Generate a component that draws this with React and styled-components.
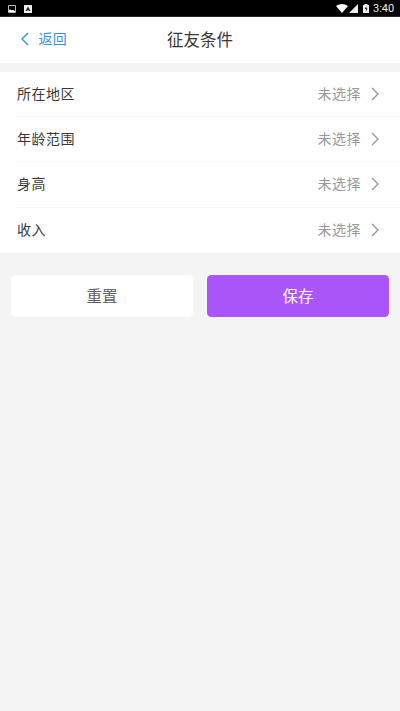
import React from 'react';
import styled, { createGlobalStyle } from 'styled-components';

const GlobalStyle = createGlobalStyle`
  * { box-sizing: border-box; }
  body { margin: 0; background: #f4f4f4; font-family: Roboto, "Noto Sans CJK SC", sans-serif; }
`;
const Screen = styled.div`
  width: 400px; height: 711px; background: #f4f4f4; overflow: hidden;
`;
const StatusBar = styled.div`
  height: 17px; background: #000; border-bottom: 1px solid #2b2826;
  display: flex; align-items: center; justify-content: space-between;
  padding: 1px 6px 0 8px; color: #fff;
`;
const StatusGroup = styled.div`
  display: flex; align-items: center; gap: ${p => p.$gap}px;
  svg { display: block; }
`;
const Clock = styled.span`
  font-size: 11px; line-height: 15px; width: 21px; color: #eee; white-space: nowrap;
`;
const Battery = styled.svg`
  margin: 0 3px 0 4px;
`;
const Header = styled.header`
  height: 46px; background: #fff; display: grid; grid-template-columns: 100px 1fr 100px; align-items: center;
`;
const Back = styled.button`
  border: 0; background: none; padding: 0 0 2px 20px; display: flex; align-items: center; gap: 9.5px;
  color: #3490dc; font: inherit; font-size: 14px; letter-spacing: 0.3px; line-height: 20px;
`;
const Title = styled.h1`
  margin: 1px 0 0; text-align: center; font-size: 16.5px; font-weight: 400; line-height: 24px; color: #383838;
`;
const List = styled.main`
  margin-top: 9px; background: #fff; height: 181px;
`;
const Row = styled.div`
  height: ${p => (p.$first ? 45 : 45.33)}px; margin-left: 17px; padding-right: 20px;
  display: flex; align-items: center; line-height: 20px;
  border-bottom: ${p => (p.$last ? 0 : 1)}px solid #f6f6f6;
  font-size: 14px; letter-spacing: 0.5px; color: #383838;
  svg { display: block; }
`;
const Label = styled.span`
  margin-top: -1px;
`;
const Value = styled(Label)`
  margin-left: auto; margin-right: 10px; color: #999;
`;
const Actions = styled.div`
  display: grid; grid-template-columns: 1fr 1fr; gap: 14.5px; padding: 22px 11.25px 0;
`;
const Button = styled.button`
  height: 42px; border: 0; border-radius: 4.5px; padding: 0 0 2px; font: inherit; font-size: 15.5px;
  background: ${p => (p.$primary ? '#aa56fa' : '#fff')}; color: ${p => (p.$primary ? '#fff' : '#606060')};
`;

const rows = ['所在地区', '年龄范围', '身高', '收入'];

export default function App() {
  return (
    <Screen>
      <GlobalStyle />
      <StatusBar>
        <StatusGroup $gap={8}>
          <svg width="8" height="8" viewBox="0 0 8 8"><path d="M.5 .5h7v7h-7z" fill="none" stroke="#bbb" /><path d="M1 7V5l1.5-.5L4 5.5l1-.8L7 6v1z" fill="#fff" /></svg>
          <svg width="8" height="8" viewBox="0 0 8 8"><rect width="8" height="8" rx=".5" fill="#eee" /><path d="M4 1.5L6.5 6H5.2L4 5 2.8 6H1.5z" fill="#222" /></svg>
        </StatusGroup>
        <StatusGroup $gap={1}>
          <svg width="12" height="9" viewBox="0 0 12 9"><path d="M0 2Q6-2 12 2L6 9z" fill="#fff" /></svg>
          <svg width="9" height="9" viewBox="0 0 9 9"><path d="M9 0v9H0z" fill="#eee" /></svg>
          <Battery width="6" height="9" viewBox="0 0 6 9"><path d="M0 1h1.5V0h3v1H6v8H0z" fill="#eee" /><path d="M3.5 2L1.7 5H3v2.2l1.5-3H3.3z" fill="#111" /></Battery>
          <Clock>3:40</Clock>
        </StatusGroup>
      </StatusBar>
      <Header>
        <Back><svg width="9" height="14" viewBox="0 0 9 14"><path d="M8 1L2 7l6 6" fill="none" stroke="currentColor" strokeWidth="1.4" /></svg>返回</Back>
        <Title>征友条件</Title>
      </Header>
      <List>
        {rows.map((label, i) => (
          <Row key={label} $first={i === 0} $last={i === rows.length - 1}><Label>{label}</Label><Value>未选择</Value>
            <svg width="9" height="14" viewBox="0 0 9 14"><path d="M1 1l6 6-6 6" fill="none" stroke="#999" strokeWidth="1.4" /></svg>
          </Row>
        ))}
      </List>
      <Actions><Button>重置</Button><Button $primary>保存</Button></Actions>
    </Screen>
  );
}
